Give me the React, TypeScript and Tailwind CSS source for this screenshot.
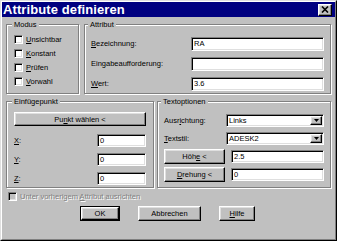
import type { ReactNode } from 'react';

const field =
  'bg-white border border-t-[#808080] border-l-[#808080] border-b-white border-r-white shadow-[inset_1px_1px_0_#000,inset_-1px_-1px_0_#dfdfdf]';
const raised =
  'bg-[#c0c0c0] border border-t-white border-l-white border-b-black border-r-black shadow-[inset_-1px_-1px_0_#808080,inset_1px_1px_0_#dfdfdf]';

function U({ children }: { children: ReactNode }) {
  return <span className="underline underline-offset-[1px] decoration-[0.5px]">{children}</span>;
}

function Group({
  label,
  className,
  legendClass,
  children,
}: {
  label: string;
  className: string;
  legendClass: string;
  children: ReactNode;
}) {
  return (
    <fieldset className={`border border-[#808080] shadow-[inset_1px_1px_0_#fff,1px_1px_0_#fff] ${className}`}>
      <legend className={`px-[2px] leading-[9px] bg-[#c0c0c0] ${legendClass}`}>{label}</legend>
      {children}
    </fieldset>
  );
}

function Check({ label, disabled }: { label: ReactNode; disabled?: boolean }) {
  return (
    <div className="flex items-center h-[14px]">
      <div
        className={`w-[9px] h-[9px] shrink-0 border border-t-[#808080] border-l-[#808080] border-b-white border-r-white shadow-[inset_1px_1px_0_#000,inset_-1px_-1px_0_#dfdfdf] ${
          disabled ? 'bg-[#c0c0c0]' : 'bg-white'
        }`}
      />
      <span
        className={`ml-[3px] leading-[9px] ${
          disabled ? 'text-[#808080] [text-shadow:1px_1px_0_#fff]' : ''
        }`}
      >
        {label}
      </span>
    </div>
  );
}

function Input({ value, className }: { value: string; className: string }) {
  return (
    <div className={`${field} ${className} flex items-center pl-[2px] leading-[10px]`}>{value}</div>
  );
}

function Combo({ value }: { value: string }) {
  return (
    <div className={`${field} w-[98px] h-[13px] flex items-stretch`}>
      <span className="flex-1 pl-[2px] leading-[11px]">{value}</span>
      <div className={`${raised} w-[12px] my-[1px] mr-[1px] flex items-center justify-center`}>
        <svg width="5" height="3" viewBox="0 0 5 3">
          <path d="M0 0h5L2.5 3z" fill="#000" />
        </svg>
      </div>
    </div>
  );
}

function Button({ children, className }: { children: ReactNode; className: string }) {
  return (
    <div className={`${raised} ${className} flex items-center justify-center leading-[9px]`}>
      {children}
    </div>
  );
}

export default function App() {
  return (
    <div className="w-[337px] h-[241px] overflow-hidden bg-[#c0c0c0] border border-t-[#dfdfdf] border-l-[#dfdfdf] border-r-black border-b-black font-['Liberation_Sans',Arial,sans-serif] text-[7.5px] text-black">
      <div className="h-full border border-t-white border-l-white border-r-[#808080] border-b-[#808080]">
        {/* title bar */}
        <div className="h-[15px] bg-[#000080] flex items-center justify-between pl-[1px] pr-[3px]">
          <span className="text-white font-bold text-[13px] leading-[15px] tracking-[0.1px]">
            Attribute definieren
          </span>
          <div className={`${raised} w-[14px] h-[12px] flex items-center justify-center`}>
            <svg width="8" height="7" viewBox="0 0 8 7">
              <path d="M1 0.5L7 6.5M7 0.5L1 6.5" stroke="#000" strokeWidth="1.6" />
            </svg>
          </div>
        </div>

        <div className="flex flex-col px-[4px]">
          {/* top row */}
          <div className="flex gap-[5px] mt-[3px]">
            <Group label="Modus" className="w-[73px] h-[74px]" legendClass="ml-[5px]">
              <div className="flex flex-col mt-[3px] pl-[7px]">
                <Check label={<><U>U</U>nsichtbar</>} />
                <Check label={<><U>K</U>onstant</>} />
                <Check label={<><U>P</U>rüfen</>} />
                <Check label={<><U>V</U>orwahl</>} />
              </div>
            </Group>
            <Group label="Attribut" className="flex-1 h-[74px]" legendClass="ml-[3px]">
              <div className="flex flex-col gap-[6px] mt-[8px] px-[6px]">
                <div className="flex items-center justify-between h-[14px]">
                  <span><U>B</U>ezeichnung:</span>
                  <Input value="RA" className="w-[133px] h-[14px]" />
                </div>
                <div className="flex items-center justify-between h-[14px]">
                  <span>Eingabeaufforderung:</span>
                  <Input value="" className="w-[133px] h-[14px]" />
                </div>
                <div className="flex items-center justify-between h-[14px]">
                  <span><U>W</U>ert:</span>
                  <Input value="3.6" className="w-[133px] h-[14px]" />
                </div>
              </div>
            </Group>
          </div>

          {/* middle row */}
          <div className="flex gap-[3px] mt-[3px]">
            <Group label="Einfügepunkt" className="w-[148px] h-[91px]" legendClass="ml-[5px]">
              <div className="flex flex-col mt-[6px] px-[7px]">
                <Button className="h-[14px]">
                  Pu<U>n</U>kt wählen&nbsp;&lt;
                </Button>
                <div className="flex flex-col gap-[6px] mt-[8px]">
                  {['X', 'Y', 'Z'].map((a) => (
                    <div key={a} className="flex items-center justify-between h-[13px]">
                      <span>
                        <U>{a}</U>:
                      </span>
                      <Input value="0" className="w-[49px] h-[13px]" />
                    </div>
                  ))}
                </div>
              </div>
            </Group>
            <Group label="Textoptionen" className="flex-1 h-[91px]" legendClass="ml-[3px]">
              <div className="flex flex-col gap-[3px] mt-[7px] px-[6px]">
                <div className="flex items-center justify-between h-[15px]">
                  <span>Ausr<U>i</U>chtung:</span>
                  <Combo value="Links" />
                </div>
                <div className="flex items-center justify-between h-[15px]">
                  <span><U>T</U>extstil:</span>
                  <Combo value="ADESK2" />
                </div>
                <div className="flex items-center justify-between h-[15px]">
                  <Button className="w-[61px] h-[15px]">
                    Höh<U>e</U>&nbsp;&lt;
                  </Button>
                  <Input value="2.5" className="w-[93px] h-[13px]" />
                </div>
                <div className="flex items-center justify-between h-[15px]">
                  <Button className="w-[61px] h-[15px]">
                    <U>D</U>rehung&nbsp;&lt;
                  </Button>
                  <Input value="0" className="w-[93px] h-[13px]" />
                </div>
              </div>
            </Group>
          </div>

          {/* bottom */}
          <div className="mt-[1px] pl-[2px]">
            <Check disabled label={<>Unter vorherigem <U>A</U>ttribut ausrichten</>} />
          </div>
          <div className="flex gap-[18px] mt-[3px] ml-[74px]">
            <div className="border border-black">
              <Button className="w-[38px] h-[13px]">OK</Button>
            </div>
            <Button className="w-[63px] h-[15px]">Abbrechen</Button>
            <Button className="w-[36px] h-[15px]">
              <U>H</U>ilfe
            </Button>
          </div>
        </div>
      </div>
    </div>
  );
}
